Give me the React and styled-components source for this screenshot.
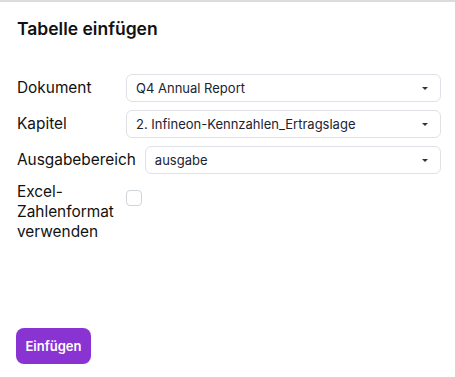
import React from 'react'
import styled, { createGlobalStyle } from 'styled-components'

const GlobalStyle = createGlobalStyle`
  html, body {
    margin: 0;
    padding: 0;
    background: #fff;
  }
  body {
    font-family: Inter, "Noto Sans", sans-serif;
    color: #111;
  }
`;

const Page = styled.div`
  height: 100vh;
  box-sizing: border-box;
  border-top: 2px solid #dcdcdc;
  padding: 0 14px 13px 17px;
  display: flex;
  flex-direction: column;
`;

const Title = styled.h2`
  margin: 15px 0 0;
  font-size: 17.5px;
  line-height: 24px;
  font-weight: 600;
  color: #111;
`;

const Form = styled.div`
  margin-top: 33px;
  display: flex;
  flex-direction: column;
  gap: 8px;
`;

const Row = styled.div`
  display: flex;
  align-items: ${({ $top }) => ($top ? 'flex-start' : 'center')};
  gap: 9px;
`;

const Label = styled.label`
  flex: 0 0 auto;
  min-width: 100px;
  width: ${({ $wrap }) => ($wrap ? '100px' : 'auto')};
  font-size: 15.4px;
  line-height: 20px;
  color: #111;
`;

const SelectBox = styled.div`
  flex: 1;
  height: 28px;
  box-sizing: border-box;
  border: 1px solid #dee2e6;
  border-radius: 6px;
  padding: 0 12px 0 9px;
  display: flex;
  align-items: center;
  justify-content: space-between;
  font-size: 13px;
  color: #1b2430;
`;

const Caret = styled.span`
  width: 0;
  height: 0;
  border-left: 3px solid transparent;
  border-right: 3px solid transparent;
  border-top: 3px solid #333;
`;

const Check = styled.span`
  width: 16px;
  height: 16px;
  box-sizing: border-box;
  border: 1px solid #ced4da;
  border-radius: 4px;
  margin-top: 8px;
`;

const Submit = styled.button`
  margin-top: auto;
  align-self: flex-start;
  margin-left: -1px;
  width: 75px;
  height: 36px;
  border: none;
  border-radius: 8px;
  background: #8a33d3;
  color: #fff;
  font-family: Inter, sans-serif;
  font-size: 13px;
  font-weight: 600;
  cursor: pointer;
`;

function Select({ value }) {
  return (
    <SelectBox>
      <span>{value}</span>
      <Caret />
    </SelectBox>
  );
}

export default function App() {
  return (
    <>
      <GlobalStyle />
      <Page>
        <Title>Tabelle einfügen</Title>
        <Form>
          <Row>
            <Label>Dokument</Label>
            <Select value="Q4 Annual Report" />
          </Row>
          <Row>
            <Label>Kapitel</Label>
            <Select value="2. Infineon-Kennzahlen_Ertragslage" />
          </Row>
          <Row>
            <Label>Ausgabebereich</Label>
            <Select value="ausgabe" />
          </Row>
          <Row $top>
            <Label $wrap>Excel-Zahlenformat verwenden</Label>
            <Check />
          </Row>
        </Form>
        <Submit>Einfügen</Submit>
      </Page>
    </>
  );
}
